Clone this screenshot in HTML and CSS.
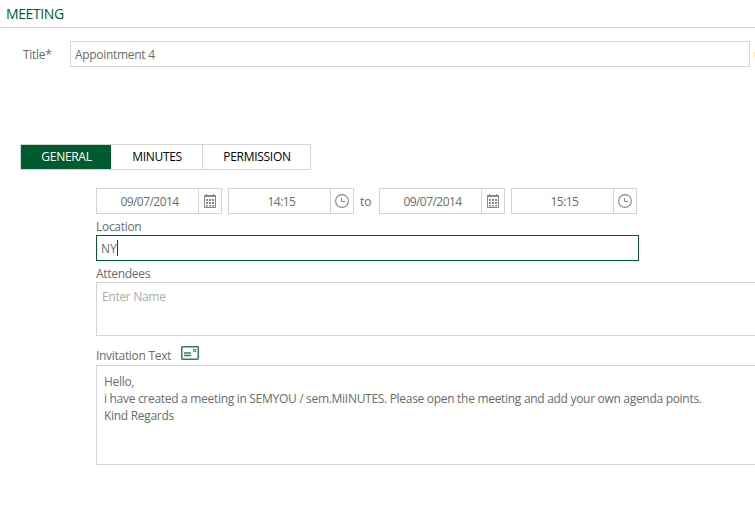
FILE: index.html
```
<!DOCTYPE html>
<html lang="en">
<head>
<meta charset="utf-8">
<title>Meeting</title>
<link rel="stylesheet" href="styles.css">
</head>
<body>
<svg class="symbols" aria-hidden="true">
  <symbol id="calendar" viewBox="0 0 12 14">
    <path d="M.5 1.5h11v12H.5z" fill="none" stroke="#888"/>
    <path d="M0 1h12v2H0zM2 0h1v2H2zM9 0h1v2H9z" fill="#888"/>
    <path d="M2 5h2v2H2zM5 5h2v2H5zM8 5h2v2H8zM2 8h2v2H2zM5 8h2v2H5zM8 8h2v2H8zM2 11h2v1.5H2zM5 11h2v1.5H5zM8 11h2v1.5H8z" fill="#888"/>
  </symbol>
  <symbol id="clock" viewBox="0 0 14 14">
    <circle cx="7" cy="7" r="6.4" fill="none" stroke="#888" stroke-width="1.1"/>
    <path d="M6.5 4v3.5H10" fill="none" stroke="#888"/>
  </symbol>
</svg>
<header class="header"><h1 class="heading">MEETING</h1></header>
<main>
  <div class="title-row">
    <label class="title-label">Title*</label>
    <div class="field title-field"><span class="title-value">Appointment 4</span></div>
    <span class="mark"></span>
  </div>
  <nav class="tabs">
    <a class="tab active">GENERAL</a>
    <a class="tab">MINUTES</a>
    <a class="tab">PERMISSION</a>
  </nav>
  <section class="form">
    <div class="when">
      <div class="picker"><span class="value date">09/07/2014</span><span class="trigger"><svg class="cal"><use href="#calendar"/></svg></span></div>
      <div class="picker"><span class="value time">14:15</span><span class="trigger"><svg class="clock"><use href="#clock"/></svg></span></div>
      <span class="to">to</span>
      <div class="picker"><span class="value date">09/07/2014</span><span class="trigger"><svg class="cal"><use href="#calendar"/></svg></span></div>
      <div class="picker"><span class="value time">15:15</span><span class="trigger"><svg class="clock"><use href="#clock"/></svg></span></div>
    </div>
    <label class="label location-label">Location</label>
    <div class="field location"><span>NY</span><i class="caret"></i></div>
    <label class="label attendees-label">Attendees</label>
    <div class="field attendees"><span>Enter Name</span></div>
    <div class="label invitation-label"><span class="invitation-text">Invitation Text</span>
      <svg class="mail" viewBox="0 0 18 14"><rect x=".75" y=".75" width="16.5" height="12.5" rx=".7" fill="none" stroke="#2e8157" stroke-width="1.5"/><path d="M3 7h7M3 9.5h7" stroke="#2e8157" stroke-width="1.3"/><rect x="12.5" y="3.5" width="2.3" height="2" fill="none" stroke="#2e8157" stroke-width=".8"/></svg>
    </div>
    <div class="field message">
      <p>Hello,</p>
      <p class="body-line">i have created a meeting in SEMYOU / sem.MiINUTES. Please open the meeting and add your own agenda points.</p>
      <p>Kind Regards</p>
    </div>
  </section>
</main>
</body>
</html>
```
FILE: styles.css
```
* { box-sizing: border-box; }
body {
  margin: 0;
  background: #fff;
  color: #6c6c6c;
  font: 12px/17px "Open Sans", "Noto Sans", sans-serif;
  letter-spacing: -0.3px;
  overflow: hidden;
  white-space: nowrap;
}
.symbols { display: none; }
.header { height: 28px; padding: 5px 6px 0; border-bottom: 1px solid #d5d5d5; }
.heading { margin: 0; font-size: 14px; line-height: 18px; font-weight: 400; letter-spacing: -0.4px; color: #005c2e; }
.field { border: 1px solid #d4d4d4; }
.title-row { display: flex; align-items: center; height: 26px; margin: 13px 0 0 23px; }
.title-label { width: 47px; }
.title-field { width: 680px; height: 26px; flex: none; padding: 4px 0 0 4px; }
.mark { width: 1px; height: 5px; margin-left: 4px; background: #fce1b5; }
.tabs { display: flex; width: 291px; height: 26px; margin: 77px 0 0 20px; border: 1px solid #d4d4d4; color: #000; }
.tab { width: 91px; text-align: center; line-height: 24px; padding-left: 1px; }
.tab:nth-child(1) { width: 90px; }
.tab:nth-child(3) { flex: 1; border-left: 1px solid #d4d4d4; }
.active { background: #005c2e; color: #fff; }
.form { margin: 18px 0 0 96px; }
.when { display: flex; align-items: center; height: 26px; }
.picker { display: flex; flex: none; width: 126px; height: 26px; border: 1px solid #d4d4d4; }
.picker + .picker { margin-left: 6px; }
.value { width: 101px; text-align: center; line-height: 26px; padding-left: 4px; letter-spacing: -0.55px; }
.trigger { display: flex; flex: 1; align-items: center; justify-content: center; border-left: 1px solid #d4d4d4; }
.cal { width: 12px; height: 14px; }
.clock { width: 14px; height: 14px; }
.to { width: 25px; padding-left: 6px; letter-spacing: 0; }
.label { display: flex; height: 21px; padding-top: 4px; }
.location { display: flex; width: 543px; height: 26px; padding: 4px; border-color: #005c2e; }
.location span { letter-spacing: 0; }
.caret { width: 1px; height: 16px; background: #333; }
.attendees { height: 54px; padding: 5px 5px; border-right: 0; color: #aaa; }
.invitation-label { height: 29px; padding-top: 11px; }
.invitation-text { width: 85px; }
.mail { width: 18px; height: 14px; margin-top: -1px; }
.message { height: 100px; padding: 7px 7px; border-right: 0; }
.message p { margin: 0; height: 17px; }
```
